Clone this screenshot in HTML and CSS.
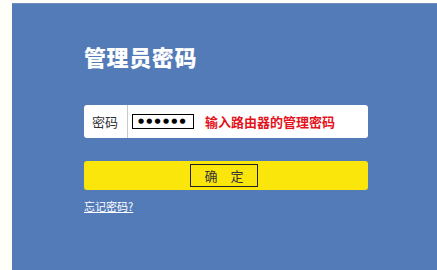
FILE: index.html
```html
<!DOCTYPE html>
<html>
<head>
<meta charset="utf-8">
<link rel="stylesheet" href="styles.css">
</head>
<body>
<div class="panel">
  <div class="title">管理员密码</div>
  <div class="row">
    <div class="label">密码</div>
    <div class="pwd">●●●●●●</div>
    <div class="hint">输入路由器的管理密码</div>
  </div>
  <div class="btn"><div class="btn-inner">确　定</div></div>
  <a class="forgot" href="#">忘记密码?</a>
</div>
</body>
</html>
```
FILE: styles.css
```css
html, body {
  margin: 0;
  padding: 0;
  background: #fffffa;
  width: 437px;
  height: 270px;
  overflow: hidden;
  font-family: "Noto Sans CJK SC", "Liberation Sans", sans-serif;
}
.panel {
  margin: 3px 0 0 12px;
  height: 267px;
  box-sizing: border-box;
  background: #537bb8;
  border-top: 1px solid #6d8ec2;
  padding: 37px 0 0 72px;
  display: flex;
  flex-direction: column;
  align-items: flex-start;
}
.title {
  color: #ffffff;
  font-size: 22px;
  font-weight: 900;
  line-height: 30px;
  letter-spacing: 0.6px;
}
.row {
  margin-top: 34px;
  width: 284px;
  height: 33px;
  background: #ffffff;
  border-radius: 3px;
  display: flex;
  align-items: center;
}
.label {
  width: 44px;
  height: 100%;
  box-sizing: border-box;
  border-right: 1px solid #c8c8c8;
  padding-left: 8px;
  font-size: 13px;
  font-weight: 400;
  color: #333;
  display: flex;
  align-items: center;
}
.pwd {
  margin-left: 4px;
  width: 62px;
  height: 15px;
  box-sizing: border-box;
  border: 1px solid #000;
  font-size: 7px;
  line-height: 13px;
  padding-left: 5px;
  letter-spacing: 2.2px;
  color: #000;
  font-family: "DejaVu Sans", sans-serif;
}
.hint {
  margin-left: 11px;
  color: #e3141c;
  font-size: 13px;
  font-weight: 700;
}
.btn {
  margin-top: 23px;
  width: 284px;
  height: 29px;
  background: #fbe60c;
  border-radius: 3px;
  display: flex;
  align-items: center;
  justify-content: center;
  padding-right: 4px;
  box-sizing: border-box;
}
.btn-inner {
  width: 68px;
  height: 23px;
  box-sizing: border-box;
  border: 1px solid #222;
  font-size: 13px;
  color: #333;
  display: flex;
  align-items: center;
  justify-content: center;
}
.forgot {
  margin-top: 9px;
  color: #ffffff;
  font-size: 11px;
  line-height: 15px;
}
```
